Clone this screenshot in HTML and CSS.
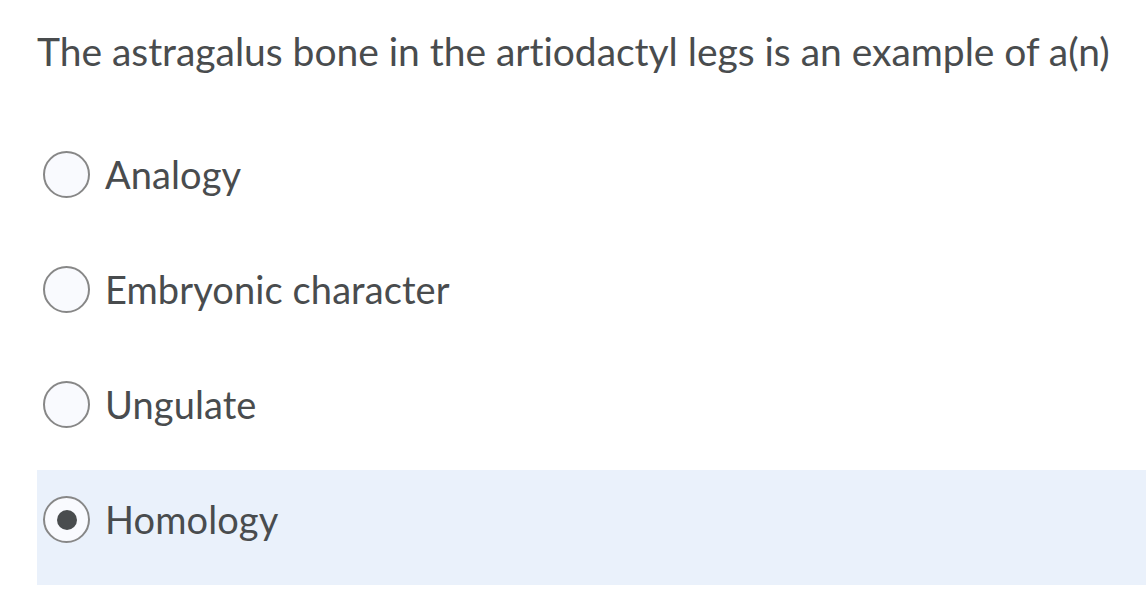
FILE: index.html
```html
<!DOCTYPE html>
<html>
<head>
<meta charset="utf-8">
<link rel="stylesheet" href="styles.css">
</head>
<body>
<div class="question">
  <div class="prompt">The astragalus bone in the artiodactyl legs is an example of a(n)</div>
  <div class="options">
    <label class="option"><span class="radio"></span><span class="label">Analogy</span></label>
    <label class="option"><span class="radio"></span><span class="label">Embryonic character</span></label>
    <label class="option"><span class="radio"></span><span class="label">Ungulate</span></label>
    <label class="option selected"><span class="radio checked"></span><span class="label">Homology</span></label>
  </div>
</div>
</body>
</html>
```
FILE: styles.css
```css
html, body {
  margin: 0;
  padding: 0;
  background: #ffffff;
}
body {
  font-family: Lato, "Noto Sans", sans-serif;
  color: #494c4e;
}
.question {
  padding-left: 37px;
  padding-top: 28px;
}
.prompt {
  font-size: 39px;
  line-height: 47px;
  height: 97px;
  white-space: nowrap;
  letter-spacing: -0.03px;
}
.options {
  display: flex;
  flex-direction: column;
}
.option {
  display: flex;
  height: 115px;
  box-sizing: border-box;
  padding: 26px 0 0 6px;
  align-items: flex-start;
}
.option.selected {
  background: #eaf1fb;
}
.radio {
  width: 47px;
  height: 47px;
  box-sizing: border-box;
  border: 2px solid #878787;
  border-radius: 50%;
  background: #f9fafe;
  display: flex;
  align-items: center;
  justify-content: center;
  flex: none;
}
.radio.checked::after {
  content: "";
  width: 20px;
  height: 20px;
  border-radius: 50%;
  background: #494c4e;
}
.label {
  margin-left: 15px;
  font-size: 38px;
  line-height: 47px;
  white-space: nowrap;
  letter-spacing: 0.1px;
}
```
